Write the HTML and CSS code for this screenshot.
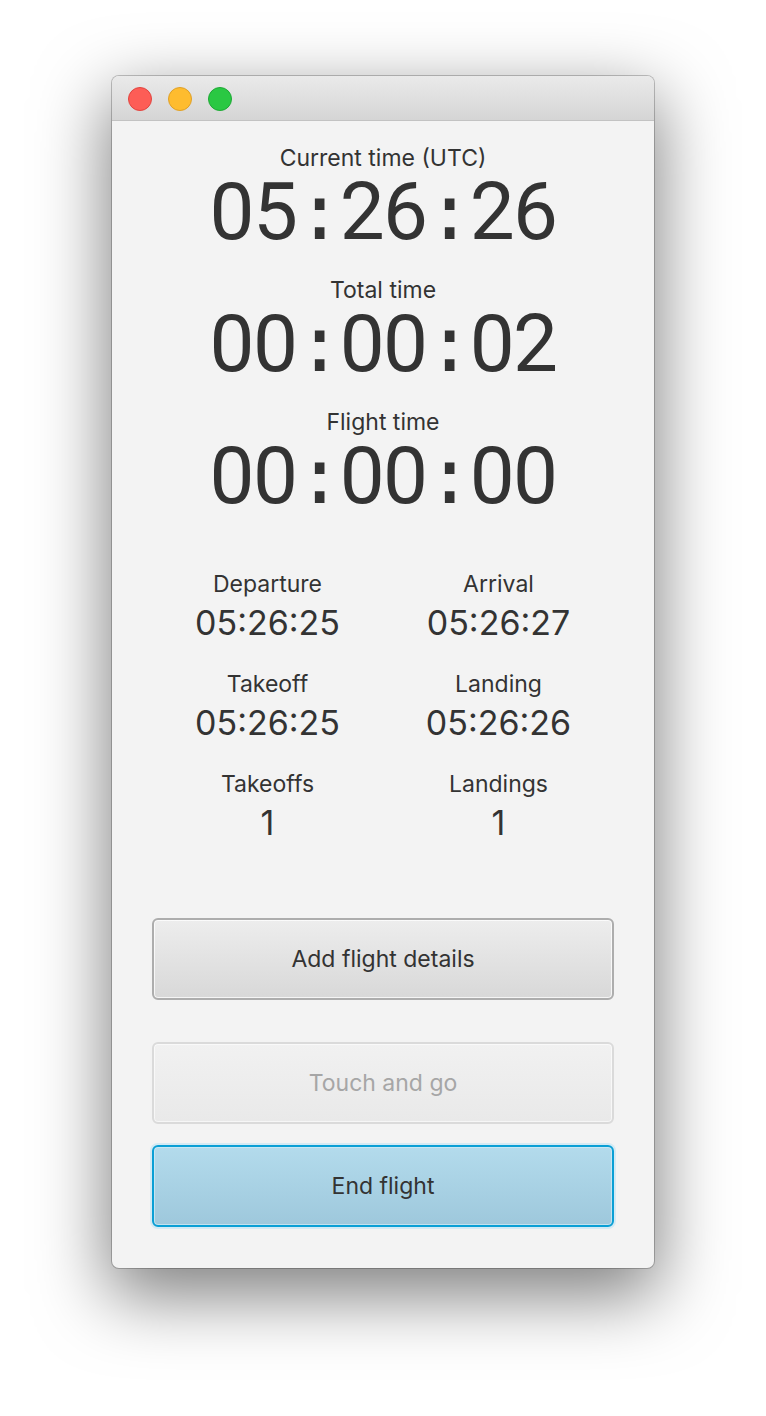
FILE: index.html
```html
<!DOCTYPE html>
<html lang="en">
<head>
<meta charset="utf-8">
<title>Flight timer</title>
<link rel="stylesheet" href="styles.css">
</head>
<body>
<div class="window">
  <div class="titlebar">
    <span class="light light-red"></span>
    <span class="light light-yellow"></span>
    <span class="light light-green"></span>
  </div>
  <div class="content">
    <section class="clocks">
      <div class="clock">
        <div class="label">Current time (UTC)</div>
        <div class="big">05<span class="sep">:</span>26<span class="sep">:</span>26</div>
      </div>
      <div class="clock">
        <div class="label">Total time</div>
        <div class="big">00<span class="sep">:</span>00<span class="sep">:</span>02</div>
      </div>
      <div class="clock">
        <div class="label">Flight time</div>
        <div class="big">00<span class="sep">:</span>00<span class="sep">:</span>00</div>
      </div>
    </section>
    <section class="stats">
      <div class="stat"><div class="label">Departure</div><div class="value">05:26:25</div></div>
      <div class="stat"><div class="label">Arrival</div><div class="value">05:26:27</div></div>
      <div class="stat"><div class="label">Takeoff</div><div class="value">05:26:25</div></div>
      <div class="stat"><div class="label">Landing</div><div class="value">05:26:26</div></div>
      <div class="stat"><div class="label">Takeoffs</div><div class="value">1</div></div>
      <div class="stat"><div class="label">Landings</div><div class="value">1</div></div>
    </section>
    <section class="actions">
      <button class="btn btn-details">Add flight details</button>
      <div class="btn-group">
        <button class="btn btn-disabled" disabled>Touch and go</button>
        <button class="btn btn-default">End flight</button>
      </div>
    </section>
  </div>
</div>
</body>
</html>
```

FILE: styles.css
```css
html, body {
  margin: 0;
  padding: 0;
  background: #ffffff;
}

body {
  min-height: 1416px;
  box-sizing: border-box;
  padding-top: 76px;
  font-family: Inter, "Noto Sans", sans-serif;
  color: #333333;
}

.window {
  width: 542px;
  height: 1192px;
  margin: 0 auto;
  box-sizing: border-box;
  border-radius: 7px;
  background: #f3f3f3;
  box-shadow: 0 0 0 1px rgba(0, 0, 0, 0.22), 0 24px 70px 4px rgba(0, 0, 0, 0.5);
  overflow: hidden;
  display: flex;
  flex-direction: column;
}

.titlebar {
  height: 43px;
  flex: none;
  border-bottom: 1px solid #c2c2c2;
  background: linear-gradient(#eaeaea, #d5d5d5);
  display: flex;
  align-items: center;
  gap: 16px;
  padding-left: 16px;
  padding-top: 1px;
  box-sizing: content-box;
}

.light {
  width: 24px;
  height: 24px;
  border-radius: 50%;
  box-sizing: border-box;
}

.light-red { background: #fd5d56; border: 1px solid #e1443f; }
.light-yellow { background: #febc2f; border: 1px solid #dfa027; }
.light-green { background: #2ac843; border: 1px solid #1ea935; }

.content {
  flex: 1;
  padding: 23px 40px 0;
  display: flex;
  flex-direction: column;
}

.label {
  font-size: 23px;
  line-height: 28px;
  text-align: center;
  color: #333333;
}

.clocks {
  display: flex;
  flex-direction: column;
  gap: 28px;
}

.clock {
  display: flex;
  flex-direction: column;
  gap: 5px;
}

.big {
  font-family: Roboto, "Liberation Sans", sans-serif;
  font-size: 80px;
  line-height: 71px;
  letter-spacing: -1.6px;
  text-align: center;
  color: #333333;
}

.sep {
  font-family: "DejaVu Sans Mono", monospace;
  font-size: 78px;
  letter-spacing: -3.6px;
}

.stats {
  margin-top: 58px;
  display: grid;
  grid-template-columns: 1fr 1fr;
  row-gap: 27px;
}

.stat {
  display: flex;
  flex-direction: column;
  gap: 5px;
}

.value {
  font-size: 34px;
  line-height: 40px;
  text-align: center;
  color: #333333;
}

.actions {
  margin-top: 75px;
  display: flex;
  flex-direction: column;
  gap: 42px;
}

.btn-group {
  display: flex;
  flex-direction: column;
  gap: 21px;
}

.btn {
  display: block;
  width: 100%;
  height: 82px;
  margin: 0;
  border-radius: 6px;
  font-family: Inter, "Noto Sans", sans-serif;
  font-size: 23px;
  color: #333333;
  padding: 0;
  box-sizing: border-box;
}

.btn-details {
  border: 2px solid #adadad;
  background: linear-gradient(#ededed, #d8d8d8);
  box-shadow: inset 0 0 0 1px rgba(255, 255, 255, 0.75);
}

.btn-disabled {
  border: 2px solid #dadada;
  background: linear-gradient(#f1f1f1, #e9e9e9);
  box-shadow: inset 0 0 0 1px rgba(255, 255, 255, 0.6);
  color: #a6a6a6;
}

.btn-default {
  border: 2px solid #0a9fd5;
  background: linear-gradient(#b3dbec, #9ec8dc);
  box-shadow: 0 0 0 2px #d3eaf4, inset 0 0 0 1px rgba(210, 236, 247, 0.7);
}
```
